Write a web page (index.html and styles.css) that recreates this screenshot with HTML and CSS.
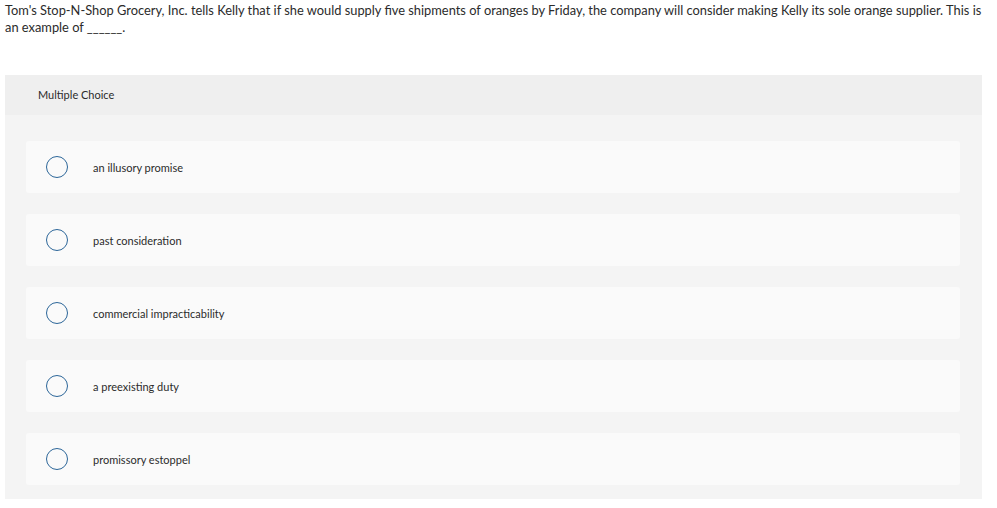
FILE: index.html
```html
<!DOCTYPE html>
<html>
<head>
<meta charset="utf-8">
<link rel="stylesheet" href="styles.css">
</head>
<body>
<p class="question">Tom's Stop-N-Shop Grocery, Inc. tells Kelly that if she would supply five shipments of oranges by Friday, the company will consider making Kelly its sole orange supplier. This is an example of ______.</p>
<section class="panel">
  <div class="panel-head">Multiple Choice</div>
  <div class="options">
    <div class="option"><span class="radio"></span><span class="label">an illusory promise</span></div>
    <div class="option"><span class="radio"></span><span class="label">past consideration</span></div>
    <div class="option"><span class="radio"></span><span class="label">commercial impracticability</span></div>
    <div class="option"><span class="radio"></span><span class="label">a preexisting duty</span></div>
    <div class="option"><span class="radio"></span><span class="label">promissory estoppel</span></div>
  </div>
</section>
</body>
</html>
```
FILE: styles.css
```css
html, body { margin: 0; padding: 0; background: #fff; }
body {
  font-family: Lato, "Liberation Sans", sans-serif;
  color: #2b2b2b;
  padding: 0 10px 0 5px;
}
.question {
  margin: 0;
  padding-top: 2px;
  font-size: 12.85px;
  line-height: 17px;
  width: 980px;
}
.panel {
  margin-top: 39px;
  background: #f4f4f4;
  width: 977px;
}
.panel-head {
  background: #efefef;
  height: 40px;
  box-sizing: border-box;
  padding-bottom: 2px;
  display: flex;
  align-items: center;
  padding-left: 33px;
  font-size: 11px;
}
.options {
  display: flex;
  flex-direction: column;
  gap: 21px;
  padding: 26px 22px 14px 21px;
}
.option {
  background: #fafafa;
  border-radius: 3px;
  height: 52px;
  display: flex;
  align-items: center;
  padding-left: 20px;
  font-size: 11px;
}
.radio {
  width: 20px;
  height: 20px;
  border: 1.5px solid #2c6699;
  border-radius: 50%;
  flex: none;
}
.label { margin-left: 25px; }
```
